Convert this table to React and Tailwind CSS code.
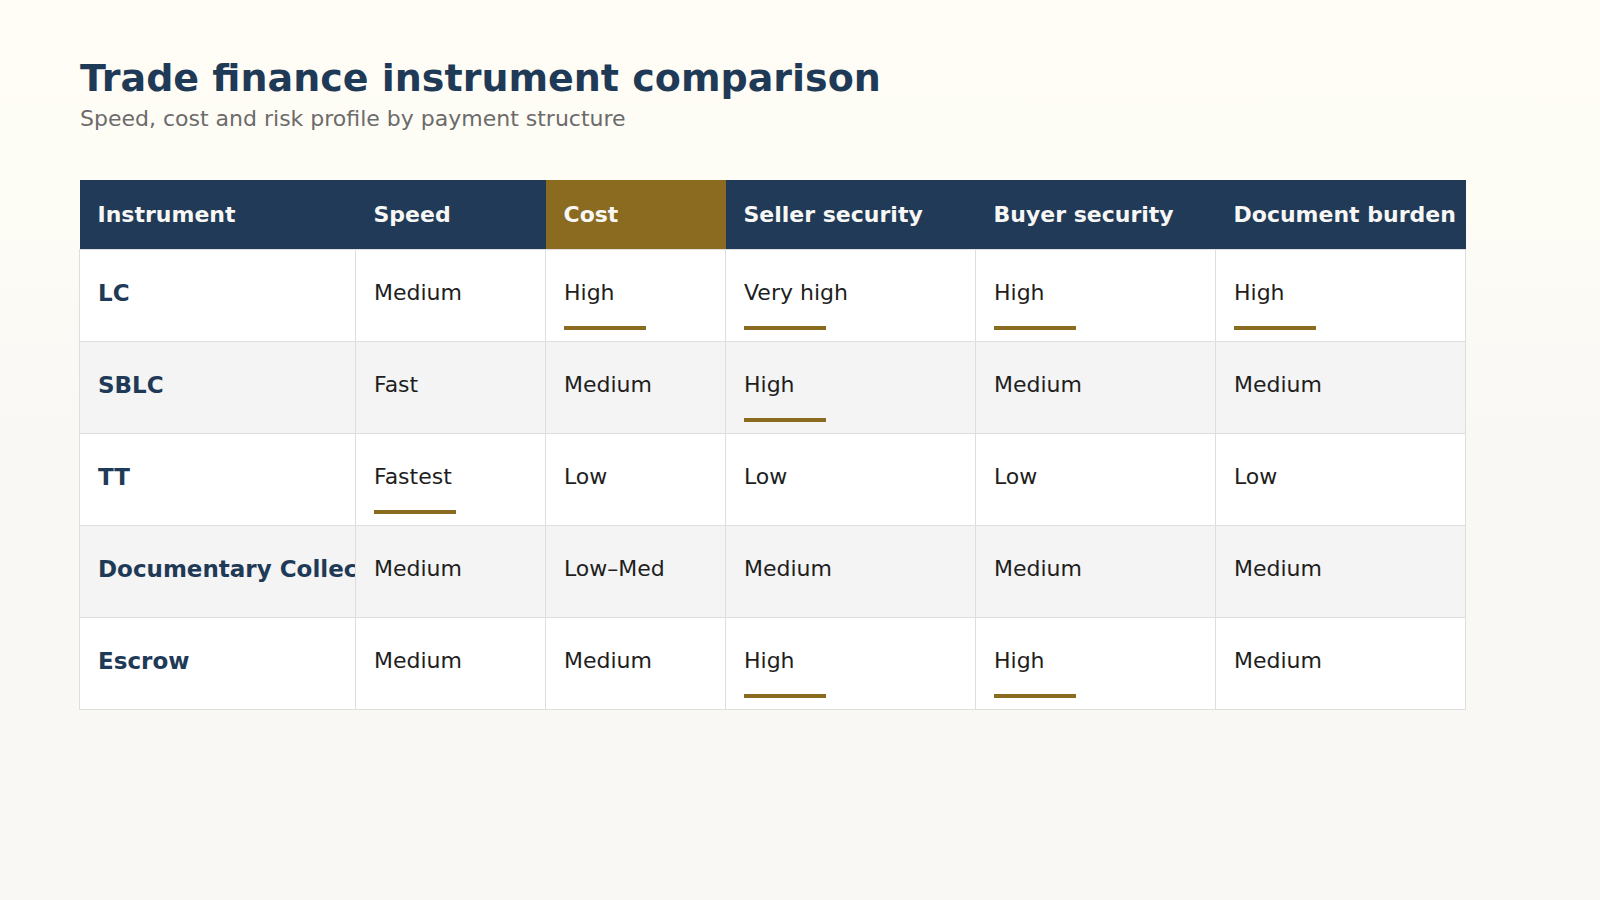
const COLUMNS = [
    { label: "Instrument", width: "w-[276px]" },
    { label: "Speed", width: "w-[190px]" },
    { label: "Cost", width: "w-[180px]", highlight: true },
    { label: "Seller security", width: "w-[250px]" },
    { label: "Buyer security", width: "w-[240px]" },
    { label: "Document burden", width: "w-[250px]" },
];

// [text, marked]
const ROWS = [
    { name: "LC", cells: [["Medium"], ["High", true], ["Very high", true], ["High", true], ["High", true]] },
    { name: "SBLC", cells: [["Fast"], ["Medium"], ["High", true], ["Medium"], ["Medium"]] },
    { name: "TT", cells: [["Fastest", true], ["Low"], ["Low"], ["Low"], ["Low"]] },
    { name: "Documentary Collection", cells: [["Medium"], ["Low–Med"], ["Medium"], ["Medium"], ["Medium"]] },
    { name: "Escrow", cells: [["Medium"], ["Medium"], ["High", true], ["High", true], ["Medium"]] },
];

export default function App() {
    return (
        <div className="min-h-[900px] w-full bg-[linear-gradient(180deg,#fffdf6_0%,#fefdf5_20%,#fbfaf5_34%,#f9f8f5_50%,#f9f8f5_100%)] px-20 pt-[56px] font-['DejaVu_Sans',sans-serif]">
            <h1 className="text-[38px] font-bold leading-[1.2] text-[#1f3a57]">
                Trade finance instrument comparison
            </h1>
            <p className="text-[22px] leading-[33px] text-[#6b6b6b]">
                Speed, cost and risk profile by payment structure
            </p>

            <table className="-ml-px mt-[45px] w-[1386px] table-fixed border-collapse text-[22px]">
                <thead>
                    <tr className="h-[70px]">
                        {COLUMNS.map((col) => (
                            <th
                                key={col.label}
                                className={`${col.width} whitespace-nowrap px-[18px] text-left align-middle font-bold text-[#f7f7f5] ${
                                    col.highlight ? "bg-[#8a6b20]" : "bg-[#213a57]"
                                }`}
                            >
                                {col.label}
                            </th>
                        ))}
                    </tr>
                </thead>
                <tbody>
                    {ROWS.map((row, i) => (
                        <tr key={row.name} className={`h-[92px] ${i % 2 === 1 ? "bg-[#f4f4f4]" : "bg-white"}`}>
                            <td className="overflow-hidden whitespace-nowrap border border-[#dedede] pb-[4px] pl-[18px] align-middle text-[23px] font-bold text-[#1f3a57]">
                                {row.name}
                            </td>
                            {row.cells.map(([text, marked], j) => (
                                <td
                                    key={j}
                                    className="whitespace-nowrap border border-[#dedede] px-[18px] pt-[26px] align-top text-[#1e1e1e]"
                                >
                                    <div className="leading-[33px]">{text}</div>
                                    {marked && <div className="mt-[17px] h-[4px] w-[82px] bg-[#8a6b20]" />}
                                </td>
                            ))}
                        </tr>
                    ))}
                </tbody>
            </table>
        </div>
    );
}
